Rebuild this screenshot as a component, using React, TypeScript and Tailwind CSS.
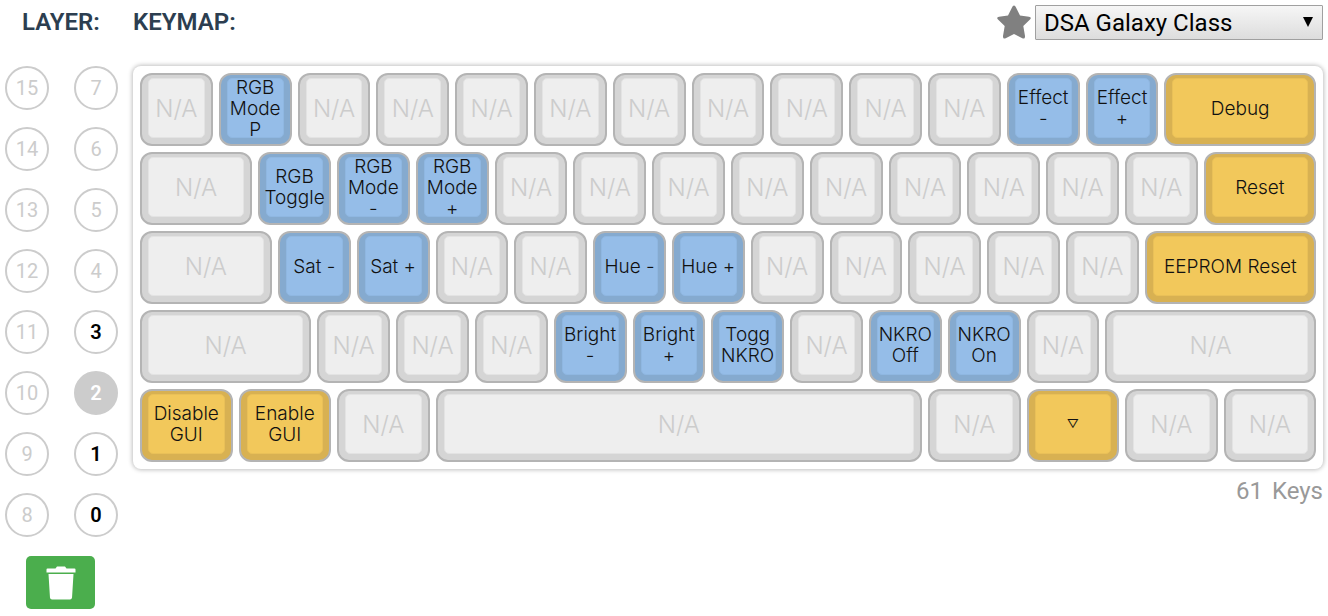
import React from "react";

type Tone = "na" | "blue" | "gold";
type KeyDef = { w: number; label: string; tone: Tone };

const na = (w = 4): KeyDef => ({ w, label: "N/A", tone: "na" });
const blue = (label: string, w = 4): KeyDef => ({ w, label, tone: "blue" });
const gold = (label: string, w = 4): KeyDef => ({ w, label, tone: "gold" });

// Key widths are in quarter units; every row adds up to 60.
const rows: KeyDef[][] = [
  [na(), blue("RGB\nMode\nP"), na(), na(), na(), na(), na(), na(), na(), na(), na(), blue("Effect\n-"), blue("Effect\n+"), gold("Debug", 8)],
  [na(6), blue("RGB\nToggle"), blue("RGB\nMode\n-"), blue("RGB\nMode\n+"), na(), na(), na(), na(), na(), na(), na(), na(), na(), gold("Reset", 6)],
  [na(7), blue("Sat -"), blue("Sat +"), na(), na(), blue("Hue -"), blue("Hue +"), na(), na(), na(), na(), na(), gold("EEPROM Reset", 9)],
  [na(9), na(), na(), na(), blue("Bright\n-"), blue("Bright\n+"), blue("Togg\nNKRO"), na(), blue("NKRO\nOff"), blue("NKRO\nOn"), na(), na(11)],
  [gold("Disable\nGUI", 5), gold("Enable\nGUI", 5), na(5), na(25), na(5), gold("▽", 5), na(5), na(5)],
];

const spans: Record<number, string> = {
  4: "col-span-4",
  5: "col-span-5",
  6: "col-span-6",
  7: "col-span-7",
  8: "col-span-8",
  9: "col-span-9",
  11: "col-span-11",
  25: "col-span-25",
};

const outer: Record<Tone, string> = {
  na: "bg-[#d5d5d5] text-[#cccccc] text-2xl font-light",
  blue: "bg-[#85aacf] text-[#111111] text-[19px] font-light",
  gold: "bg-[#d8b152] text-[#111111] text-[19px] font-light",
};

const inner: Record<Tone, string> = {
  na: "bg-[#eeeeee] border-[#e3e3e3]",
  blue: "bg-[#95bde8] border-[#8fb7e1]",
  gold: "bg-[#f2c85b] border-[#e9c058]",
};

function Key({ w, label, tone }: KeyDef) {
  const small = label === "▽" ? "text-xs font-normal" : "";
  return (
    <div className={`${spans[w]} h-full min-h-0 p-[3px]`}>
      <button
        type="button"
        className={`flex h-full w-full rounded-xl border-2 border-[#b4b4b4] px-[6px] pt-[3px] pb-[6px] ${outer[tone]}`}
      >
        <span
          className={`flex h-full min-h-0 w-full min-w-0 items-center justify-center rounded-[5px] border text-center leading-[21px] whitespace-pre ${inner[tone]}`}
        >
          <span className={`-mx-4 ${small}`}>{label}</span>
        </span>
      </button>
    </div>
  );
}

const layers = [15, 7, 14, 6, 13, 5, 12, 4, 11, 3, 10, 2, 9, 1, 8, 0];

function layerStyle(n: number) {
  if (n === 2) return "bg-[#cccccc] text-white font-semibold";
  if (n < 4) return "bg-white text-black font-semibold";
  return "bg-white text-[#cccccc]";
}

export default function App() {
  return (
    <main className="flex gap-[15px] bg-white pr-[5px] pl-[5px] font-['Roboto',sans-serif]">
      <aside className="flex w-[113px] shrink-0 flex-col">
        <h2 className="h-[66px] pt-2 pl-[17px] text-2xl leading-7 font-semibold text-[#2c3e50]">LAYER:</h2>
        <div className="grid grid-cols-2 justify-between gap-y-[17px]">
          {layers.map((n) => (
            <button
              key={n}
              type="button"
              className={`size-11 rounded-full border-2 border-[#cccccc] text-xl leading-5 even:justify-self-end odd:justify-self-start ${layerStyle(n)}`}
            >
              {n}
            </button>
          ))}
        </div>
        <button
          type="button"
          aria-label="Clear layer"
          className="mt-[19px] ml-[21px] flex h-[53px] w-[69px] items-center justify-center rounded-[5px] bg-[#4bae4d] text-white"
        >
          <svg viewBox="0 0 30 34" className="h-[34px] w-[30px]" fill="currentColor" aria-hidden="true">
            <path d="M1.500 2.500H9.500L11 .5H19L20.500 2.500H28.500Q29.500 2.500 29.500 3.500V6.500H.5V3.500Q.5 2.500 1.500 2.500Z" />
            <path d="M2.500 8H27.500L26 31.500Q25.800 33.500 24 33.500H6Q4.200 33.500 4 31.500Z" />
          </svg>
        </button>
      </aside>
      <section className="min-w-0 flex-1">
        <header className="flex h-[66px] items-start justify-between">
          <h2 className="pt-2 text-2xl leading-7 font-semibold text-[#2c3e50]">KEYMAP:</h2>
          <div className="flex items-start gap-1 pt-[5px]">
            <svg viewBox="0 0 34 34" className="size-[34px]" fill="#808080" aria-hidden="true">
              <path d="M17 .5Q18.200 .5 19 2.400L23 10.400L32 11.700Q35 12.300 33 14.600L26.300 21L28 31Q28.200 34.500 25.300 33.300L17 29L8.700 33.300Q5.800 34.500 6 31L7.700 21L1 14.600Q-1 12.300 2 11.700L11 10.400L15 2.400Q15.800 .5 17 .5Z" />
            </svg>
            <div className="relative">
              <select
                aria-label="Keycap set"
                className="h-[35px] w-72 appearance-none rounded-[1px] border border-[#a0a0a0] bg-linear-to-b from-[#f6f6f6] to-[#dddddd] pr-8 pl-2 text-2xl leading-8 text-black"
              >
                <option>DSA Galaxy Class</option>
              </select>
              <svg viewBox="0 0 10 10" className="pointer-events-none absolute top-3 right-[10px] size-[10px]" aria-hidden="true">
                <path d="M0 0H10L5 10Z" />
              </svg>
            </div>
          </div>
        </header>
        <div className="grid auto-rows-[79px] grid-cols-[repeat(60,minmax(0,1fr))] rounded-lg bg-white p-1 font-['Inter',sans-serif] shadow-[0_0_4px_1px_rgba(0,0,0,0.25)]">
          {rows.flatMap((row, r) => row.map((k, i) => <Key key={`${r}-${i}`} {...k} />))}
        </div>
        <p className="flex justify-end gap-[9px] pt-2 text-2xl leading-7 text-[#999999]">
          <span>61</span>
          <span>Keys</span>
        </p>
      </section>
    </main>
  );
}
